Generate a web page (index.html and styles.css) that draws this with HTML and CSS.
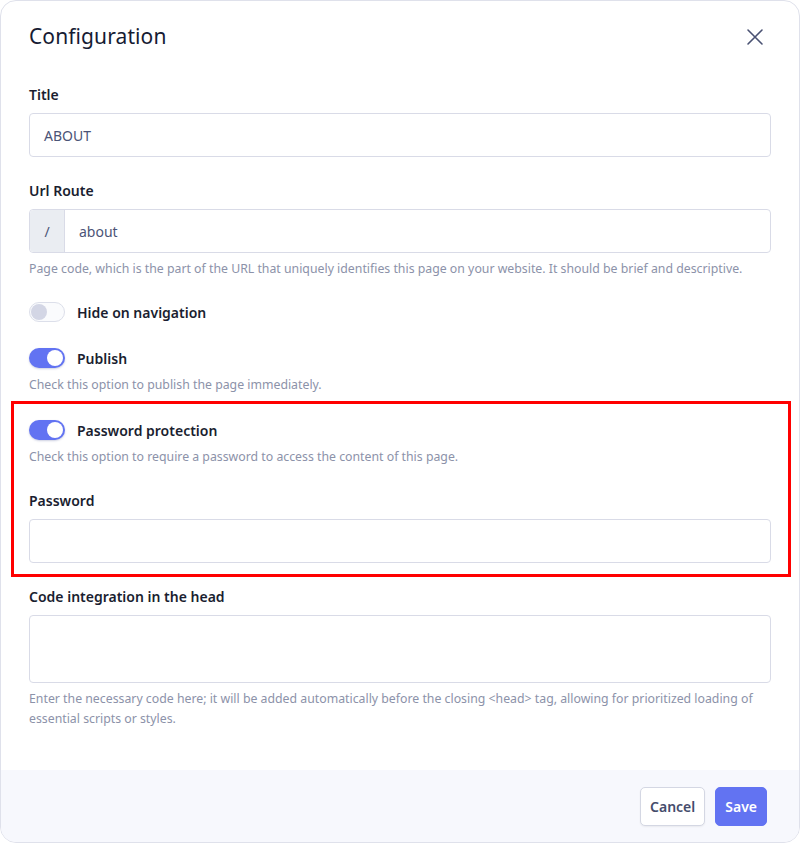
FILE: index.html
```html
<!DOCTYPE html>
<html>
<head>
<meta charset="utf-8">
<link rel="stylesheet" href="styles.css">
</head>
<body>
<div class="card">
  <div class="header">
    <h1 class="title">Configuration</h1>
    <button class="close" aria-label="Close">
      <svg width="18" height="18" viewBox="0 0 18 18"><path d="M2 2L16 16M16 2L2 16" stroke="#4a5273" stroke-width="1.6" fill="none" stroke-linecap="round"/></svg>
    </button>
  </div>
  <div class="body">
    <div class="field">
      <label class="label">Title</label>
      <div class="input"><span class="value">ABOUT</span></div>
    </div>
    <div class="field mt24">
      <label class="label">Url Route</label>
      <div class="input group"><span class="prefix">/</span><span class="value">about</span></div>
      <p class="help">Page code, which is the part of the URL that uniquely identifies this page on your website. It should be brief and descriptive.</p>
    </div>
    <div class="toggle-row mt22">
      <span class="switch off"><span class="knob"></span></span>
      <span class="toggle-label">Hide on navigation</span>
    </div>
    <div class="toggle-block mt24">
      <div class="toggle-row">
        <span class="switch on"><span class="knob"></span></span>
        <span class="toggle-label">Publish</span>
      </div>
      <p class="help">Check this option to publish the page immediately.</p>
    </div>
    <div class="highlight">
      <div class="toggle-block">
        <div class="toggle-row">
          <span class="switch on"><span class="knob"></span></span>
          <span class="toggle-label">Password protection</span>
        </div>
        <p class="help">Check this option to require a password to access the content of this page.</p>
      </div>
      <div class="field mt24">
        <label class="label">Password</label>
        <div class="input"></div>
      </div>
      <div class="red-box"></div>
    </div>
    <div class="field mt10">
      <label class="label">Code integration in the head</label>
      <div class="input textarea"></div>
      <p class="help">Enter the necessary code here; it will be added automatically before the closing &lt;head&gt; tag, allowing for prioritized loading of essential scripts or styles.</p>
    </div>
  </div>
  <div class="footer">
    <button class="btn cancel">Cancel</button>
    <button class="btn save">Save</button>
  </div>
</div>
</body>
</html>
```
FILE: styles.css
```css
* { box-sizing: border-box; }
html, body { margin: 0; padding: 0; background: #ffffff; }
body { font-family: "Noto Sans", "Open Sans", sans-serif; color: #1b1f33; }
.card {
  width: 800px;
  height: 843px;
  border: 1px solid #dfe1eb;
  border-radius: 16px;
  overflow: hidden;
  display: flex;
  flex-direction: column;
  background: #fff;
}
.header {
  display: flex;
  align-items: center;
  justify-content: space-between;
  padding: 0 28px;
  height: 71px;
}
.title {
  margin: 0 0 2px 0;
  font-weight: 400;
  font-size: 21px;
  line-height: 30px;
  color: #161b33;
  letter-spacing: 0.1px;
}
.close {
  border: none;
  background: none;
  padding: 0;
  width: 20px;
  height: 20px;
  display: flex;
  align-items: center;
  justify-content: center;
  margin-right: 6px;
}
.body {
  flex: 1;
  padding: 13px 28px 0 28px;
  display: flex;
  flex-direction: column;
}
.mt24 { margin-top: 24px; }
.mt22 { margin-top: 22px; }
.mt10 { margin-top: 10px; }
.field { display: flex; flex-direction: column; }
.label {
  font-size: 14px;
  font-weight: 600;
  color: #1a1e30;
  line-height: 20px;
  margin-bottom: 8px;
}
.input {
  height: 44px;
  border: 1px solid #d9dbe7;
  border-radius: 4px;
  display: flex;
  align-items: center;
  padding: 0 14px;
  font-size: 14px;
  color: #4b5477;
}
.input.group { padding: 0; }
.prefix {
  width: 35px;
  height: 100%;
  background: #eaedf2;
  border-right: 1px solid #d9dbe7;
  display: flex;
  align-items: center;
  justify-content: center;
  color: #4b5477;
  border-radius: 4px 0 0 4px;
  margin-right: 14px;
}
.textarea { height: 68px; }
.help {
  margin: 6px 0 0 0;
  font-size: 12.3px;
  line-height: 20px;
  color: #8c92a9;
}
.toggle-row {
  display: flex;
  align-items: center;
  gap: 12px;
  height: 22px;
}
.switch {
  width: 36px;
  height: 20px;
  border-radius: 10px;
  position: relative;
  display: inline-block;
  flex: none;
}
.switch.off { background: #fafbfd; border: 1px solid #dcdfea; }
.switch.on { background: #6273f2; box-shadow: 0 1px 2px rgba(60,70,140,0.25); }
.knob {
  position: absolute;
  top: 2px;
  width: 16px;
  height: 16px;
  border-radius: 50%;
}
.switch.off .knob { left: 1px; top: 1px; background: #d3d6e5; }
.switch.on .knob { right: 2px; background: #fff; }
.toggle-label { font-size: 14px; font-weight: 600; color: #1a1e30; }
.highlight {
  position: relative;
  margin-top: 6px;
  padding: 18px 0 14px 0;
}
.red-box {
  position: absolute;
  left: -18px;
  right: -20px;
  top: 0;
  bottom: 0;
  border: 3px solid #ff0000;
  pointer-events: none;
}
.footer {
  height: 72px;
  background: #f7f8fd;
  display: flex;
  align-items: center;
  justify-content: flex-end;
  gap: 10px;
  padding: 0 32px 0 0;
  flex: none;
}
.btn {
  height: 39px;
  border-radius: 5px;
  font-family: "Noto Sans", sans-serif;
  font-size: 14px;
  font-weight: 600;
  padding: 0 9px;
}
.cancel { background: #fff; border: 1px solid #d4d7e3; color: #454c6c; box-shadow: 0 1px 2px rgba(0,0,0,0.06); }
.save { background: #6273f2; border: 1px solid #6273f2; color: #fff; }
```
